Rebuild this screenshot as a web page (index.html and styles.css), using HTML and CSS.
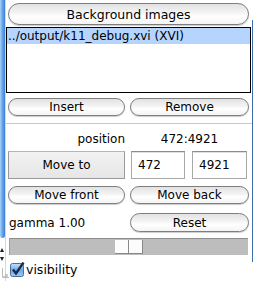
FILE: index.html
```html
<!doctype html>
<html lang="en">
<head>
    <meta charset="UTF-8" />
    <title>Background images</title>
    <link rel="stylesheet" href="styles.css">
</head>
<body>
    <div class="window">
        <div class="sideScroll">
            <div class="sideThumb"></div>
            <div class="sideArrows">
                <span class="arrowUp"></span>
                <span class="arrowDown"></span>
            </div>
            <svg class="grip" width="7" height="10" viewBox="0 0 7 10">
                <path d="M1 9 L6 9 M3 7 L6 7" stroke="#999" stroke-width="1"/>
                <path d="M0.5 0 L0.5 9.5 L7 9.5" stroke="#bbb" fill="none"/>
            </svg>
        </div>

        <div class="panel">
            <button class="aqua wide">Background images</button>
            <div class="fileList">
                <div class="fileRow selected">../output/k11_debug.xvi (XVI)</div>
            </div>
            <div class="row">
                <button class="aqua">Insert</button>
                <button class="aqua">Remove</button>
            </div>
            <hr class="sep">
            <div class="row posRow">
                <span class="posLabel">position</span>
                <span class="posValue">472:4921</span>
            </div>
            <div class="moveRow">
                <button class="bevel">Move to</button>
                <input type="text" value="472">
                <input type="text" value="4921">
            </div>
            <div class="row frontRow">
                <button class="aqua">Move front</button>
                <button class="aqua">Move back</button>
            </div>
            <div class="row gammaRow">
                <span class="gamma">gamma 1.00</span>
                <button class="aqua">Reset</button>
            </div>
            <div class="slider">
                <div class="sliderThumb"><span></span><span></span></div>
            </div>
            <label class="check">
                <svg width="15" height="15" viewBox="0 0 15 15">
                    <defs>
                        <linearGradient id="chkFill" x1="0" y1="0" x2="0" y2="1">
                            <stop offset="0" stop-color="#c6e0fb"/>
                            <stop offset="0.5" stop-color="#6ea8ea"/>
                            <stop offset="1" stop-color="#9cc9f6"/>
                        </linearGradient>
                    </defs>
                    <rect x="0.5" y="1.5" width="13" height="13" rx="2" fill="url(#chkFill)" stroke="#4a6f9e"/>
                    <path d="M3 7.5 L6 11.5 L13.5 0.5" stroke="#1c2a44" stroke-width="2.4" fill="none"/>
                </svg>
                visibility
            </label>
        </div>

        <div class="edge"></div>
    </div>
</body>
</html>
```

FILE: styles.css
```css
html, body {
    margin: 0;
    padding: 0;
    background: #fff;
}
body {
    font-family: "DejaVu Sans", sans-serif;
    font-size: 12px;
    color: #000;
}
.window {
    display: flex;
    width: 253px;
    height: 281px;
    overflow: hidden;
}

/* neighbouring scroller on the left */
.sideScroll {
    width: 6px;
    display: flex;
    flex-direction: column;
    border-right: 1px solid #d8d8d8;
    box-sizing: border-box;
}
.sideThumb {
    height: 238px;
    background: linear-gradient(to right, #a9d1f8, #5d9fe8 55%, #3c82d8);
    border-radius: 0 0 3px 3px;
}
.sideArrows {
    display: flex;
    flex-direction: column;
    gap: 5px;
    margin-top: 10px;
}
.arrowUp {
    width: 0;
    height: 0;
    border-left: 2px solid transparent;
    border-right: 2px solid transparent;
    border-bottom: 4px solid #222;
}
.arrowDown {
    width: 0;
    height: 0;
    border-left: 2px solid transparent;
    border-right: 2px solid transparent;
    border-top: 4px solid #222;
}
.grip {
    margin-top: 7px;
    margin-left: 2px;
}

.panel {
    width: 246px;
    padding: 3px 3px 0 2px;
    box-sizing: border-box;
    display: flex;
    flex-direction: column;
}
.edge {
    width: 1px;
    margin-top: 20px;
    height: 242px;
    background: #3d6fb0;
}

button {
    font-family: inherit;
    font-size: 12px;
    color: #000;
    margin: 0;
    padding: 0;
}
.aqua {
    height: 18px;
    border: 1px solid #7e7e7e;
    border-radius: 10px;
    background: linear-gradient(#e2e2e2, #f4f4f4 45%, #ffffff 60%, #f4f4f4);
    box-shadow: 0 1px 1px rgba(0, 0, 0, 0.2);
}
.aqua.wide {
    height: 22px;
    border-radius: 11px;
    font-size: 12.5px;
}

.fileList {
    margin: 2px -2px 0 -2px;
    height: 66px;
    border: 1px solid #000;
    box-sizing: border-box;
    background: #fff;
}
.fileRow {
    height: 16px;
    line-height: 16px;
    padding-left: 1px;
    white-space: nowrap;
}
.fileRow.selected {
    background: #b5d5ff;
}

.row {
    display: grid;
    grid-template-columns: 117px 1fr;
    column-gap: 5px;
    margin-top: 5px;
    align-items: center;
}
.sep {
    margin: 7px -3px 0 -2px;
    border: none;
    border-top: 1px solid #c9c9c9;
    height: 0;
}
.posRow {
    margin-top: 7px;
    height: 16px;
}
.posLabel {
    text-align: right;
}
.posValue {
    text-align: center;
}

.moveRow {
    display: grid;
    grid-template-columns: 117px 54px 56px;
    column-gap: 6px;
    margin-top: 4px;
    height: 28px;
}
.moveRow input:last-child {
    margin-left: 1px;
}
.bevel {
    height: 28px;
    border: 1px solid #9a9a9a;
    border-top-color: #b5b5b5;
    background: linear-gradient(#f2f2f2, #e6e6e6);
}
.moveRow input {
    height: 28px;
    box-sizing: border-box;
    margin: 0;
    border: 1px solid #a8a8a8;
    border-top-color: #8c8c8c;
    box-shadow: inset 0 1px 0 #e0e0e0;
    padding: 0 0 0 6px;
    font-family: inherit;
    font-size: 12px;
    color: #000;
    outline: none;
}

.frontRow {
    margin-top: 7px;
}
.gammaRow {
    margin-top: 9px;
}
.gammaRow .aqua {
    height: 19px;
}
.gamma {
    padding-left: 1px;
}

.slider {
    margin: 6px 1px 0 1px;
    height: 17px;
    background: #bdbdbd;
    border-top: 1px solid #8d8d8d;
    border-left: 1px solid #a0a0a0;
    box-sizing: border-box;
    display: flex;
    justify-content: center;
    align-items: flex-end;
}
.sliderThumb {
    display: flex;
    margin-bottom: 1px;
}
.sliderThumb span {
    width: 13px;
    height: 13px;
    background: #fcfcfc;
    border-right: 1px solid #888;
    border-bottom: 1px solid #888;
}

.check {
    display: flex;
    align-items: center;
    gap: 1px;
    margin: 6px 0 0 2px;
    height: 16px;
    font-size: 12.5px;
}
```
